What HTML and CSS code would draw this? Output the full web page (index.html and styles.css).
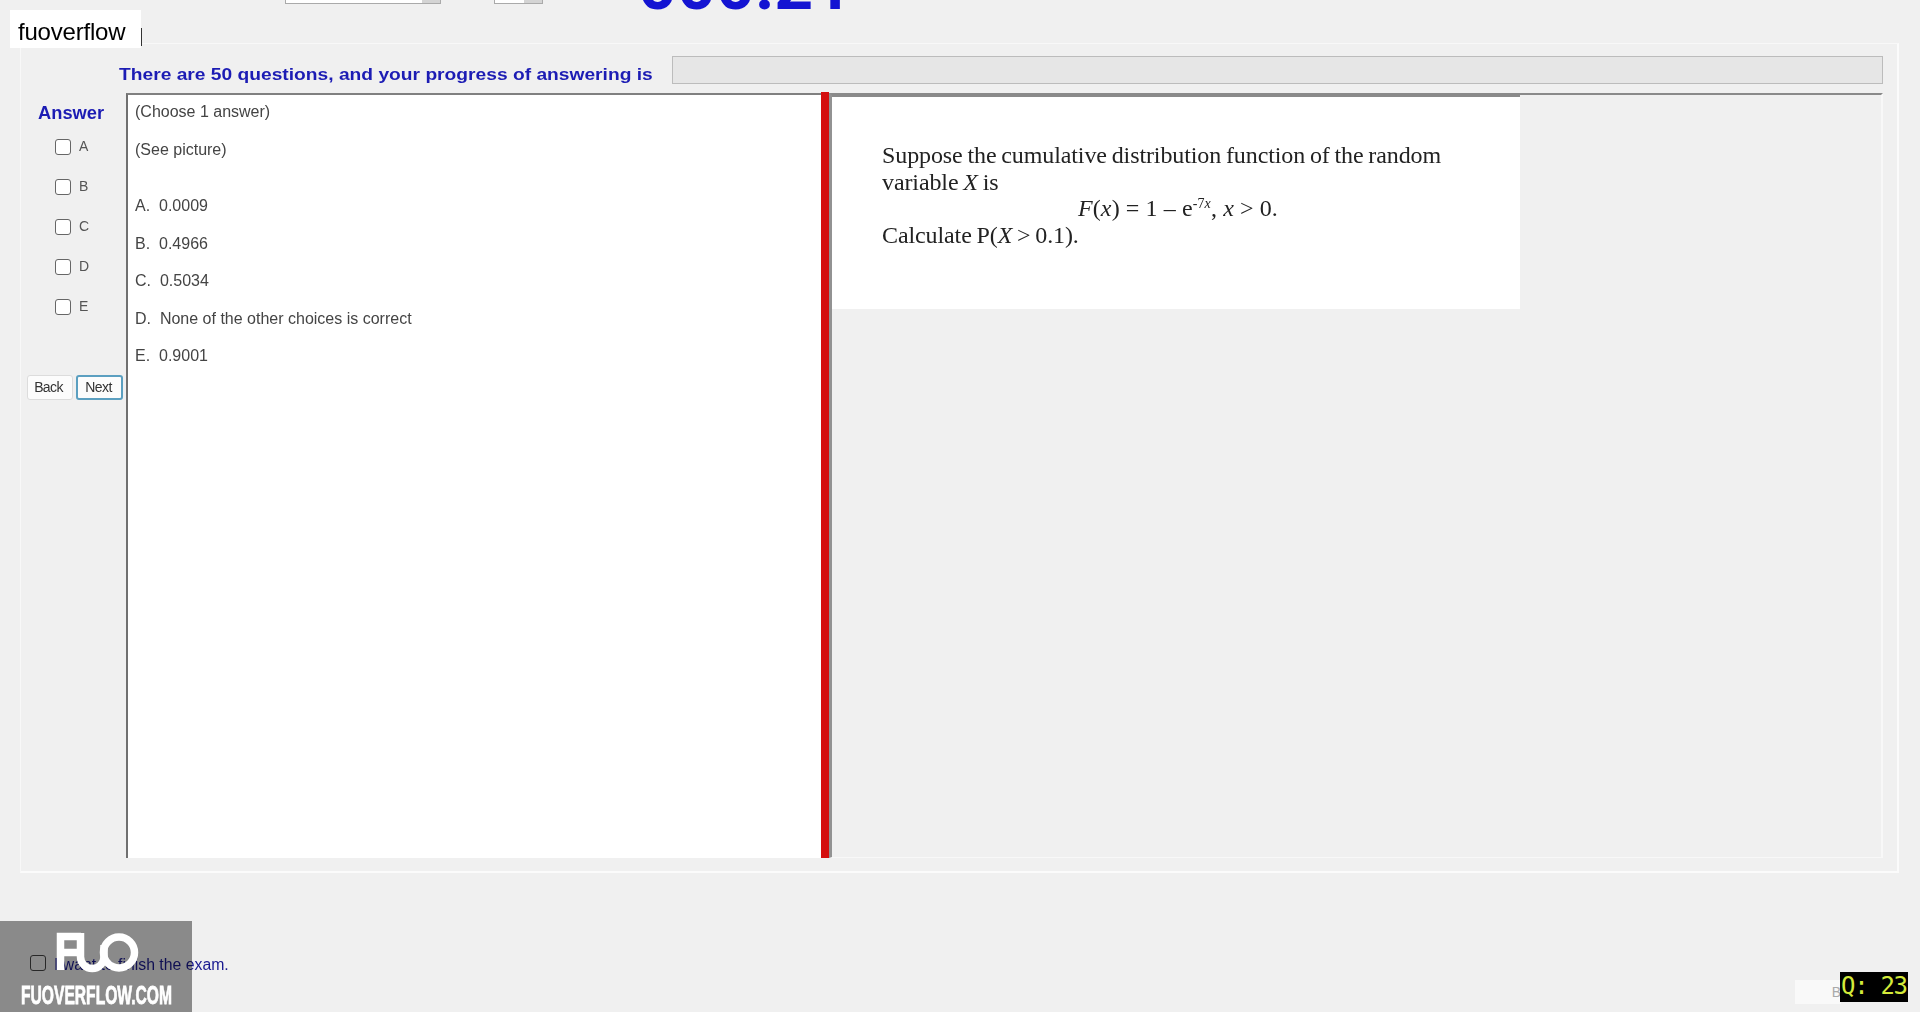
FILE: index.html
```html
<!DOCTYPE html>
<html lang="en">
<head>
<meta charset="utf-8">
<title>Exam</title>
<link rel="stylesheet" href="styles.css">
</head>
<body>
<div class="topstrip">
  <div class="combo wide"><span class="arrow"></span></div>
  <div class="combo narrow"><span class="arrow"></span></div>
  <div class="timer">000:21</div>
</div>
<main class="panel">
  <div class="progress-row">
    <div class="progress-label">There are 50 questions, and your progress of answering is</div>
    <div class="progress-bar"></div>
  </div>
  <div class="work">
    <aside class="answers">
      <div class="answer-title">Answer</div>
      <label class="opt"><span class="box"></span>A</label>
      <label class="opt"><span class="box"></span>B</label>
      <label class="opt"><span class="box"></span>C</label>
      <label class="opt"><span class="box"></span>D</label>
      <label class="opt"><span class="box"></span>E</label>
      <div class="nav">
        <div class="btn">Back</div>
        <div class="btn focus">Next</div>
      </div>
    </aside>
    <section class="question">
      <p class="q-line">(Choose 1 answer)</p>
      <p class="q-line">(See picture)</p>
      <p class="q-line first-choice">A.&nbsp; 0.0009</p>
      <p class="q-line">B.&nbsp; 0.4966</p>
      <p class="q-line">C.&nbsp; 0.5034</p>
      <p class="q-line">D.&nbsp; None of the other choices is correct</p>
      <p class="q-line">E.&nbsp; 0.9001</p>
    </section>
    <div class="splitter"></div>
    <section class="picture-pane">
      <div class="picture">
        <p class="m">Suppose the cumulative distribution function of the random<br>variable <i>X</i> is</p>
        <p class="m formula"><i>F</i>(<i>x</i>) = 1 – e<sup>-7<i>x</i></sup>, <i>x</i> &gt; 0.</p>
        <p class="m">Calculate P(<i>X</i> &gt; 0.1).</p>
      </div>
    </section>
  </div>
</main>
<div class="finish"><span class="box"></span>I want to finish the exam.</div>

<div class="tag">fuoverflow</div>
<div class="cursor"></div>
<div class="wm">
  <svg class="wm-logo" width="85" height="45" viewBox="0 0 85 45" aria-hidden="true">
    <path d="M5.5 40V6.5H26M5.5 22.5H24" fill="none" stroke="#fff" stroke-width="7.5"/>
    <path d="M25.5 3V26.75A11.75 11.75 0 0 0 49 26.75V15" fill="none" stroke="#fff" stroke-width="7.5"/>
    <circle cx="64" cy="22.5" r="15.5" fill="none" stroke="#fff" stroke-width="7.5"/>
  </svg>
  <div class="wm-text">FUOVERFLOW.COM</div>
</div>
<div class="ghost">B</div>
<div class="q-badge">Q: 23</div>
</body>
</html>
```
FILE: styles.css
```css
* { box-sizing: border-box; }
html, body { margin: 0; height: 1012px; overflow: hidden; }
body {
  background: #f0f0f0;
  font-family: "Liberation Sans", Arial, sans-serif;
  color: #333;
  position: relative;
}
p { margin: 0; }

.topstrip {
  height: 43px;
  position: relative;
  display: flex;
  align-items: flex-start;
  overflow: hidden;
  padding-left: 285px;
}
.combo {
  height: 4px;
  background: #fff;
  border: 1px solid #aaa;
  border-top: 0;
  position: relative;
}
.combo.wide { width: 156px; }
.combo.narrow { width: 49px; margin-left: 53px; }
.arrow {
  position: absolute; right: 0; top: 0; bottom: 0; width: 18px; background: #d4d4d4;
}
.timer {
  margin-left: 95px;
  margin-top: -44px;
  font-family: Roboto, "Liberation Sans", sans-serif;
  font-size: 68px;
  line-height: 60px;
  font-weight: bold;
  color: #1414d2;
}

.panel {
  margin-left: 20px;
  width: 1879px;
  height: 830px;
  border: 1px solid #f8f8f8;
  border-right: 2px solid #fbfbfb;
  border-bottom: 2px solid #fbfbfb;
  padding: 12px 14px 0 6px;
}
.progress-row {
  display: flex;
  align-items: center;
  height: 28px;
  padding-left: 92px;
}
.progress-label {
  width: 554px;
  font-size: 17px;
  line-height: 20px;
  padding-top: 10px;
  height: 30px;
  font-weight: bold;
  color: #1c1cb4;
  white-space: nowrap;
  transform: scaleX(1.13);
  transform-origin: left;
}
.progress-bar {
  width: 1212px;
  height: 28px;
  background: #e6e6e6;
  border: 1px solid #bcbcbc;
}

.work {
  display: flex;
  margin-top: 9px;
  height: 765px;
}
.answers {
  width: 99px;
  flex: none;
  display: flex;
  flex-direction: column;
}
.answer-title {
  margin: 10px 0 15px 11px;
  font-size: 17.6px;
  line-height: 20px;
  font-weight: bold;
  color: #1c1cb4;
  transform: scaleX(1.04);
  transform-origin: left;
}
.opt {
  height: 40px;
  display: flex;
  align-items: flex-start;
  font-size: 14px;
  line-height: 16px;
  color: #555;
  padding-left: 28px;
  gap: 8px;
}
.box {
  display: block;
  flex: none;
  width: 16px;
  height: 16px;
  margin-top: 1px;
  background: #fff;
  border: 1px solid #666;
  border-radius: 3px;
}
.nav {
  display: flex;
  gap: 3px;
  margin-top: 37px;
}
.btn {
  width: 46px;
  height: 25px;
  background: #fcfcfc;
  border: 1px solid #dcdcdc;
  border-radius: 3px;
  font-size: 14px;
  letter-spacing: -.6px;
  line-height: 23px;
  padding-right: 3px;
  text-align: center;
  color: #333;
}
.btn.focus { width: 47px; border: 2px solid #5b9fc0; line-height: 21px; padding-right: 2px; }

.question {
  width: 695px;
  flex: none;
  background: #fff;
  border-left: 2px solid #707070;
  border-top: 2px solid #808080;
  padding: 7px 0 0 7px;
  font-size: 16px;
  color: #444;
}
.q-line { height: 37.5px; line-height: 19px; }
.first-choice { margin-top: 19px; }

.splitter {
  width: 8px;
  flex: none;
  margin-top: -1px;
  background: #d40f0f;
  margin-right: 3px;
}
.picture-pane {
  flex: 1;
  border-top: 2px solid #8a8a8a;
  border-left: 3px solid #929292;
  border-right: 2px solid #f8f8f8;
  border-bottom: 1px solid #f8f8f8;
  margin-left: -3px;
}
.picture {
  width: 688px;
  height: 214px;
  background: #fff;
  border-top: 2px solid #8a8a8a;
  padding: 45px 0 0 50px;
  font-family: "Liberation Serif", "Times New Roman", serif;
  font-size: 24px;
  line-height: 26.5px;
  color: #222;
  letter-spacing: -.1px;
  word-spacing: -1.1px;
}
.formula { padding-left: 196px; letter-spacing: .1px; word-spacing: 0; }
.formula sup { font-size: 14px; line-height: 0; vertical-align: 8px; }

.finish {
  position: absolute;
  left: 30px;
  top: 955px;
  display: flex;
  align-items: flex-start;
  gap: 8px;
  font-size: 15.8px;
  line-height: 20px;
  color: #1a1a90;
}
.finish .box { margin-top: 0; background: transparent; border-color: #444; }

.tag {
  position: absolute;
  left: 10px;
  top: 10px;
  width: 131px;
  height: 38px;
  background: #fff;
  color: #000;
  font-size: 24px;
  line-height: 44px;
  padding-left: 8px;
  letter-spacing: -.2px;
}
.cursor {
  position: absolute;
  left: 141px;
  top: 28px;
  width: 1px;
  height: 18px;
  background: #333;
}
.wm {
  position: absolute;
  left: 0;
  top: 921px;
  width: 192px;
  height: 91px;
  color: #fff;
}
.wm::before {
  content: "";
  position: absolute;
  inset: 0;
  background: #939393;
  mix-blend-mode: multiply;
}
.wm-logo {
  display: block;
  position: absolute;
  left: 55px;
  top: 9px;
}
.wm-text {
  position: absolute;
  left: 21px;
  top: 62px;
  font-size: 25px;
  line-height: 24px;
  font-weight: bold;
  white-space: nowrap;
  -webkit-text-stroke: .8px #fff;
  transform: scaleX(.625);
  transform-origin: left;
}
.ghost {
  position: absolute;
  left: 1795px;
  top: 980px;
  width: 46px;
  height: 24px;
  background: #f9f9f9;
  color: #aaa;
  font-size: 14px;
  line-height: 24px;
  text-align: right;
}
.q-badge {
  position: absolute;
  left: 1840px;
  top: 972px;
  width: 68px;
  height: 30px;
  background: #000;
  color: #d4ea3a;
  font-family: "DejaVu Sans Mono", monospace;
  font-size: 24px;
  line-height: 29px;
  white-space: nowrap;
  padding-left: 1px;
  letter-spacing: -1.3px;
}
```
